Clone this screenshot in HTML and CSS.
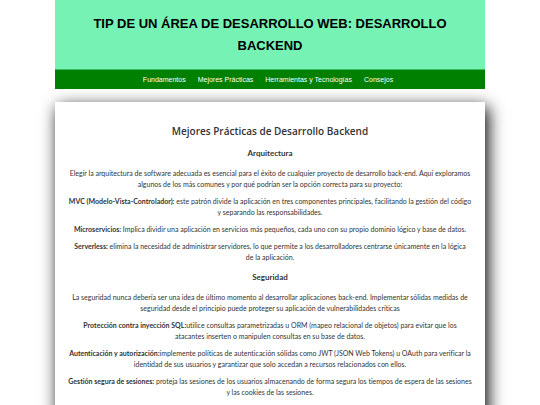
FILE: index.html
```html
<!DOCTYPE html>
<html lang="es">
<head>
    <meta charset="UTF-8">
    <meta name="viewport" content="width=device-width, initial-scale=1.0">
    <title>Mejores Prácticas de Desarrollo Backend</title>
    <link rel="stylesheet" href="styles.css">
</head>
<body>
    <div class="pagina">
        <header>
            <h1>TIP DE UN ÁREA DE DESARROLLO WEB: DESARROLLO BACKEND</h1>
        </header>

        <nav class="menu">
            <a href="#">Fundamentos</a>
            <a href="#">Mejores Prácticas</a>
            <a href="#">Herramientas y Tecnologías</a>
            <a href="#">Consejos</a>
        </nav>

        <main class="contenido">
            <h2>Mejores Prácticas de Desarrollo Backend</h2>

            <h3>Arquitectura</h3>
            <p>Elegir la arquitectura de software adecuada es esencial para el éxito de cualquier proyecto de desarrollo back-end. Aquí exploramos algunos de los más comunes y por qué podrían ser la opción correcta para su proyecto:</p>
            <p><strong>MVC (Modelo-Vista-Controlador):</strong> este patrón divide la aplicación en tres componentes principales, facilitando la gestión del código y separando las responsabilidades.</p>
            <p><strong>Microservicios:</strong> Implica dividir una aplicación en servicios más pequeños, cada uno con su propio dominio lógico y base de datos.</p>
            <p><strong>Serverless:</strong> elimina la necesidad de administrar servidores, lo que permite a los desarrolladores centrarse únicamente en la lógica de&nbsp;la aplicación.</p>

            <h3>Seguridad</h3>
            <p>La seguridad nunca debería ser una idea de último momento al desarrollar aplicaciones back-end. Implementar sólidas medidas de seguridad desde el principio puede proteger su aplicación de vulnerabilidades críticas</p>
            <p><strong>Protección contra inyección SQL:</strong>utilice consultas parametrizadas u ORM (mapeo relacional de objetos) para evitar que los atacantes inserten o manipulen consultas en su base de datos.</p>
            <p><strong>Autenticación y autorización:</strong>implemente políticas de autenticación sólidas como JWT (JSON Web Tokens) u OAuth para verificar la identidad de sus usuarios y garantizar que solo accedan a recursos relacionados con ellos.</p>
            <p><strong>Gestión segura de sesiones:</strong> proteja las sesiones de los usuarios almacenando de forma segura los tiempos de espera de las sesiones y las cookies de las sesiones.</p>
        </main>
    </div>
</body>
</html>
```
FILE: styles.css
```css
body {
    font-family: "Trebuchet MS", Lato, sans-serif;
    font-size: 7px;
    line-height: 11px;
    font-variant-ligatures: none;
    color: #333;
    background-color: white;
    margin: 0;
    text-align: center;
}
.pagina {
    padding: 0 55px;
}
header {
    font-family: Arial, "Liberation Sans", sans-serif;
    background-color: #77f2b5;
    color: black;
    padding: 13px 20px 12px;
}
h1 {
    font-size: 13px;
    line-height: 22px;
    margin: 0;
}
.menu {
    font-family: Arial, "Liberation Sans", sans-serif;
    background-color: green;
    border-top: 1px solid #3fbb5e;
    padding: 4px 8px 4px 4px;
    display: flex;
    justify-content: center;
    gap: 12px;
}
.menu a {
    color: white;
    text-decoration: none;
}
.contenido {
    background-color: white;
    margin-top: 13px;
    padding: 13px;
    box-shadow: 3px 5px 16px black;
}
h2 {
    font-family: "Trebuchet MS", "Open Sans", sans-serif;
    font-size: 10px;
    font-weight: 600;
    line-height: 16px;
    margin: 8px 0;
}
h3 {
    font-size: 8px;
    line-height: 13px;
    margin: 8px 0;
}
p {
    margin: 6px 0;
}
```
